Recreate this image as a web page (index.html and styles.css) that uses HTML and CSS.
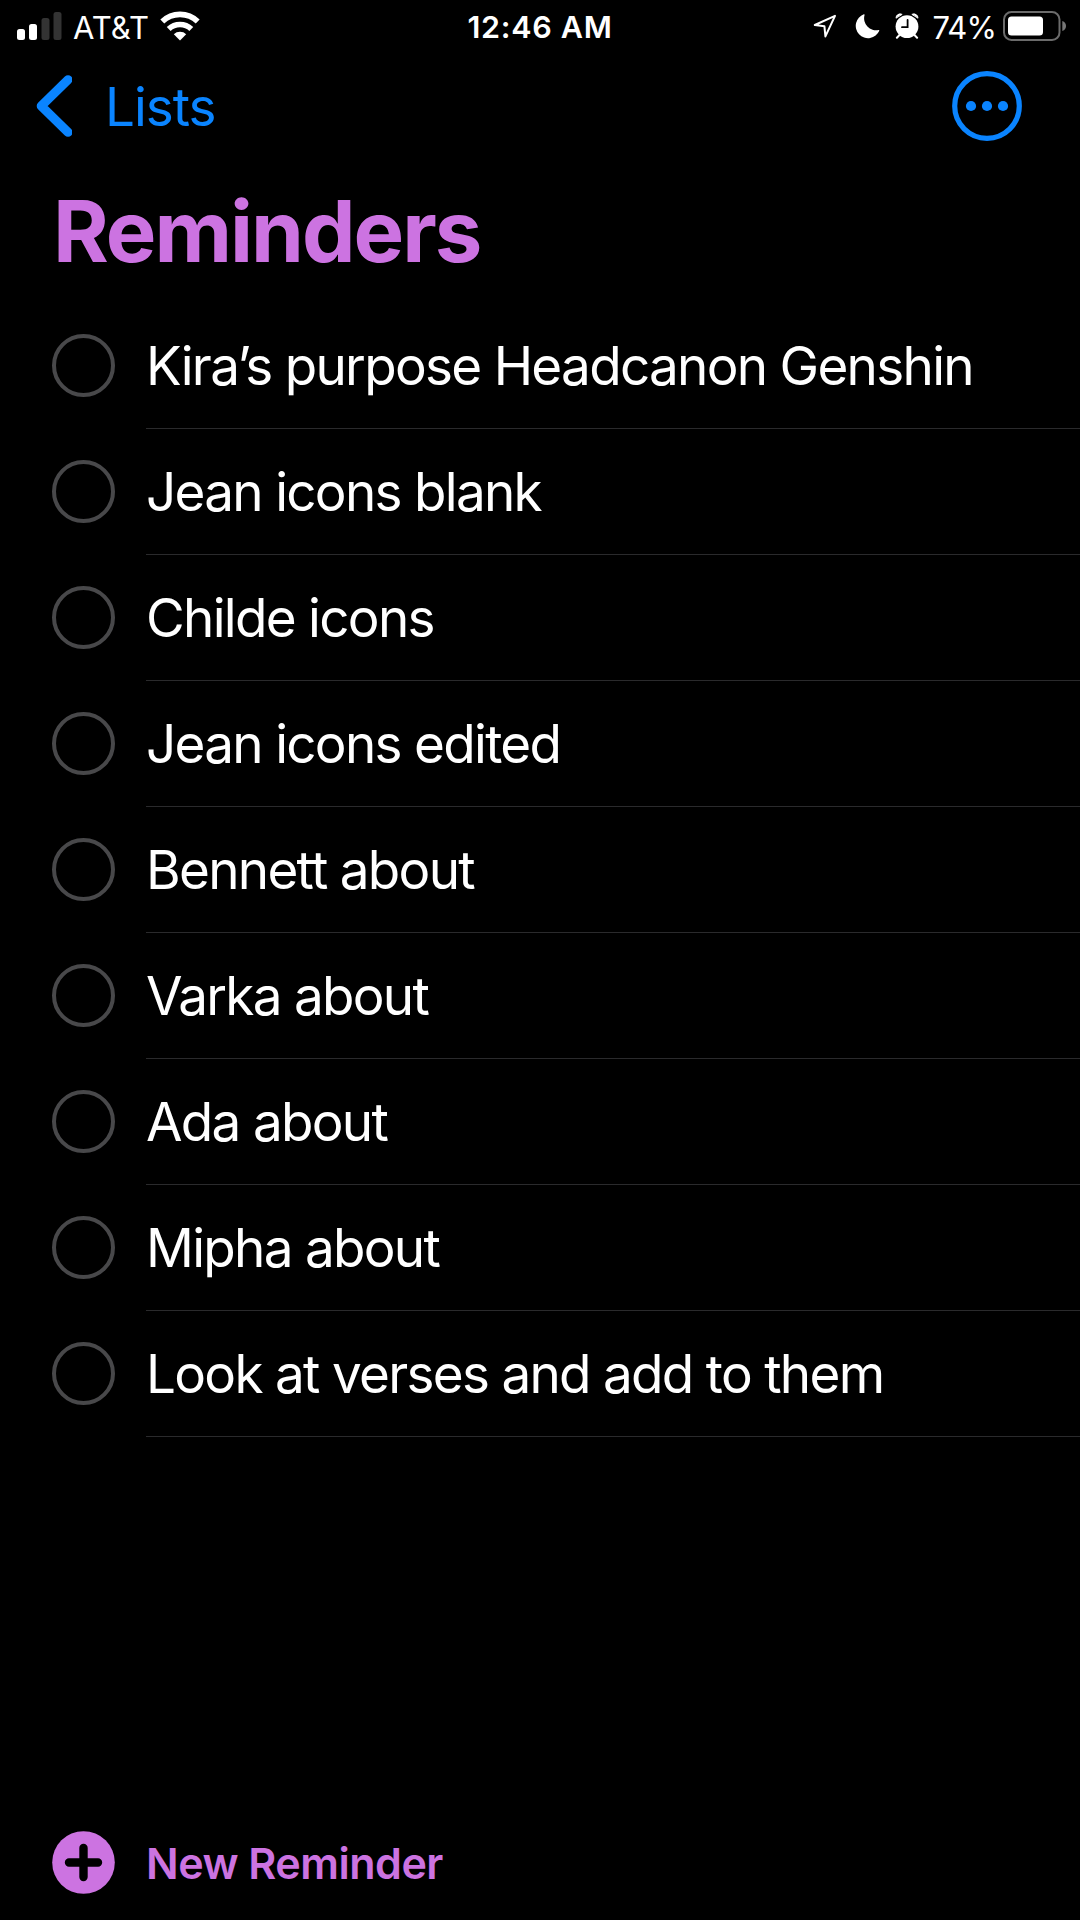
FILE: index.html
```html
<!DOCTYPE html>
<html lang="en">
<head>
    <meta charset="UTF-8">
    <title>Reminders</title>
    <link rel="stylesheet" href="styles.css">
</head>
<body>
    <div class="status">
        <div class="status-left">
            <svg class="signal" width="45" height="28" viewBox="0 0 45 28">
                <rect x="0" y="17" width="8" height="11" rx="2.5" fill="#fff"/>
                <rect x="12" y="12" width="8" height="16" rx="2.5" fill="#fff"/>
                <rect x="24.5" y="6" width="8" height="22" rx="2.5" fill="#333"/>
                <rect x="36.5" y="0" width="8" height="28" rx="2.5" fill="#333"/>
            </svg>
            <span class="carrier">AT&amp;T</span>
            <svg class="wifi" width="40" height="30" viewBox="0 0 40 30" fill="none" stroke="#fff" stroke-width="5.6">
                <path d="M2.3 10.6a25.4 25.4 0 0 1 35.4 0"/>
                <path d="M8.7 18a16.4 16.4 0 0 1 22.6 0"/>
                <path d="M20 29.5l-6.2-6.3a9 9 0 0 1 12.4 0z" fill="#fff" stroke="none"/>
            </svg>
        </div>
        <div class="time">12:46 AM</div>
        <div class="status-right">
            <svg class="location" width="24" height="24" viewBox="0 0 24 24" fill="none" stroke="#fff" stroke-width="2" stroke-linejoin="round">
                <path d="M22 1.8L1.8 11l9.6 1.2 1 10.2z"/>
            </svg>
            <svg class="moon" width="25" height="25" viewBox="0 0 25 25">
                <path d="M8.8.3a.6.6 0 0 1 .7.9A12 12 0 0 0 23.6 16a.6.6 0 0 1 .7.8A12.3 12.3 0 1 1 8.8.3z" fill="#fff"/>
            </svg>
            <svg class="alarm" width="24" height="26" viewBox="0 0 24 26" fill="none" stroke-linecap="round">
                <path d="M1 4.8A4 4 0 0 1 6.8 1.2zM23 4.8A4 4 0 0 0 17.2 1.2z" fill="#fff" stroke="#fff"/>
                <path d="M4.5 22l-2.6 2.8M19.5 22l2.6 2.8" stroke="#fff" stroke-width="2"/>
                <circle cx="12" cy="13.6" r="11.4" fill="#fff"/>
                <path d="M12.6 7v7.2H7" stroke="#000" stroke-width="1.8"/>
            </svg>
            <span class="percent">74%</span>
            <svg class="battery" width="64" height="30" viewBox="0 0 64 30">
                <rect x="1" y="1" width="55.5" height="28" rx="7.5" fill="none" stroke="#6b6b6b" stroke-width="2"/>
                <rect x="5" y="5.5" width="35" height="19" rx="3.5" fill="#fff"/>
                <path d="M59.3 10c5 1.4 5 8.8 0 10z" fill="#777"/>
            </svg>
        </div>
    </div>

    <div class="nav">
        <div class="back">
            <svg width="36" height="62" viewBox="0 0 36 62">
                <path d="M32 4.7L5.2 31l26.8 26.3" fill="none" stroke="#0a84ff" stroke-width="9" stroke-linecap="round" stroke-linejoin="round"/>
            </svg>
            <span>Lists</span>
        </div>
        <svg class="more" width="70" height="70" viewBox="0 0 70 70">
            <circle cx="35" cy="35" r="32.3" fill="none" stroke="#0a84ff" stroke-width="5.2"/>
            <g fill="#0a84ff">
                <circle cx="19" cy="35" r="5.1"/>
                <circle cx="35" cy="35" r="5.1"/>
                <circle cx="51" cy="35" r="5.1"/>
            </g>
        </svg>
    </div>

    <h1>Reminders</h1>

    <ul class="list">
        <li><span class="check"></span><span class="text">Kira’s purpose Headcanon Genshin</span></li>
        <li><span class="check"></span><span class="text">Jean icons blank</span></li>
        <li><span class="check"></span><span class="text">Childe icons</span></li>
        <li><span class="check"></span><span class="text">Jean icons edited</span></li>
        <li><span class="check"></span><span class="text">Bennett about</span></li>
        <li><span class="check"></span><span class="text">Varka about</span></li>
        <li><span class="check"></span><span class="text">Ada about</span></li>
        <li><span class="check"></span><span class="text">Mipha about</span></li>
        <li><span class="check"></span><span class="text">Look at verses and add to them</span></li>
    </ul>

    <div class="footer">
        <svg width="63" height="63" viewBox="0 0 63 63">
            <circle cx="31.5" cy="31.5" r="31.3" fill="#cc73e1"/>
            <path d="M31.5 17v29M17 31.5h29" stroke="#000" stroke-width="8.4" stroke-linecap="round"/>
        </svg>
        <span>New Reminder</span>
    </div>
</body>
</html>
```

FILE: styles.css
```css
* {
    box-sizing: border-box;
}
body {
    margin: 0;
    height: 1920px;
    background: #000;
    color: #fff;
    font-family: Inter, "Liberation Sans", sans-serif;
    display: flex;
    flex-direction: column;
    overflow: hidden;
}
svg {
    display: block;
    flex: none;
}

/* status bar */
.status {
    height: 54px;
    display: grid;
    grid-template-columns: 1fr auto 1fr;
    align-items: center;
    padding: 0 13px 0 17px;
    font-size: 31px;
    white-space: nowrap;
}
.status-left, .status-right {
    display: flex;
    align-items: center;
}
.status-right {
    justify-content: flex-end;
}
.status svg {
    margin-bottom: 2px;
}
.carrier {
    margin-left: 11px;
    letter-spacing: 0;
}
.wifi {
    margin-left: 11px;
}
.time {
    padding-right: 4px;
    padding-bottom: 1px;
    font-weight: 600;
    font-size: 30.5px;
    letter-spacing: 0.7px;
}
.moon {
    margin-left: 18px;
}
.alarm {
    margin-left: 15px;
}
.percent {
    margin-left: 13px;
    letter-spacing: -0.9px;
}
.battery {
    margin-left: 7px;
}

/* nav */
.nav {
    height: 104px;
    display: flex;
    align-items: center;
    justify-content: space-between;
    padding: 0 58px 0 36px;
}
.back {
    display: flex;
    align-items: center;
    color: #0a84ff;
    font-size: 53px;
}
.back span {
    margin-left: 33px;
    padding-top: 1px;
    letter-spacing: -1px;
}

h1 {
    margin: 0;
    height: 144.5px;
    padding: 24px 0 0 53px;
    color: #cc73e1;
    font-size: 85px;
    line-height: 100px;
    font-weight: 700;
    letter-spacing: -2px;
}

/* reminders */
.list {
    list-style: none;
    margin: 0;
    padding: 0;
}
.list li {
    height: 126.1px;
    display: flex;
    align-items: center;
    padding-left: 52px;
}
.check {
    flex: none;
    width: 63px;
    height: 63px;
    margin-bottom: 1px;
    border: 4px solid #48484a;
    border-radius: 50%;
}
.text {
    flex: 1;
    height: 100%;
    margin-left: 31px;
    border-bottom: 1px solid #2a2a2c;
    font-size: 53px;
    line-height: 126px;
    letter-spacing: -1.7px;
    white-space: nowrap;
}

.footer {
    margin-top: auto;
    display: flex;
    align-items: center;
    padding: 0 0 26px 52px;
    color: #cc73e1;
    font-size: 43px;
    font-weight: 600;
}
.footer span {
    margin-left: 31px;
    letter-spacing: -0.5px;
}
```
